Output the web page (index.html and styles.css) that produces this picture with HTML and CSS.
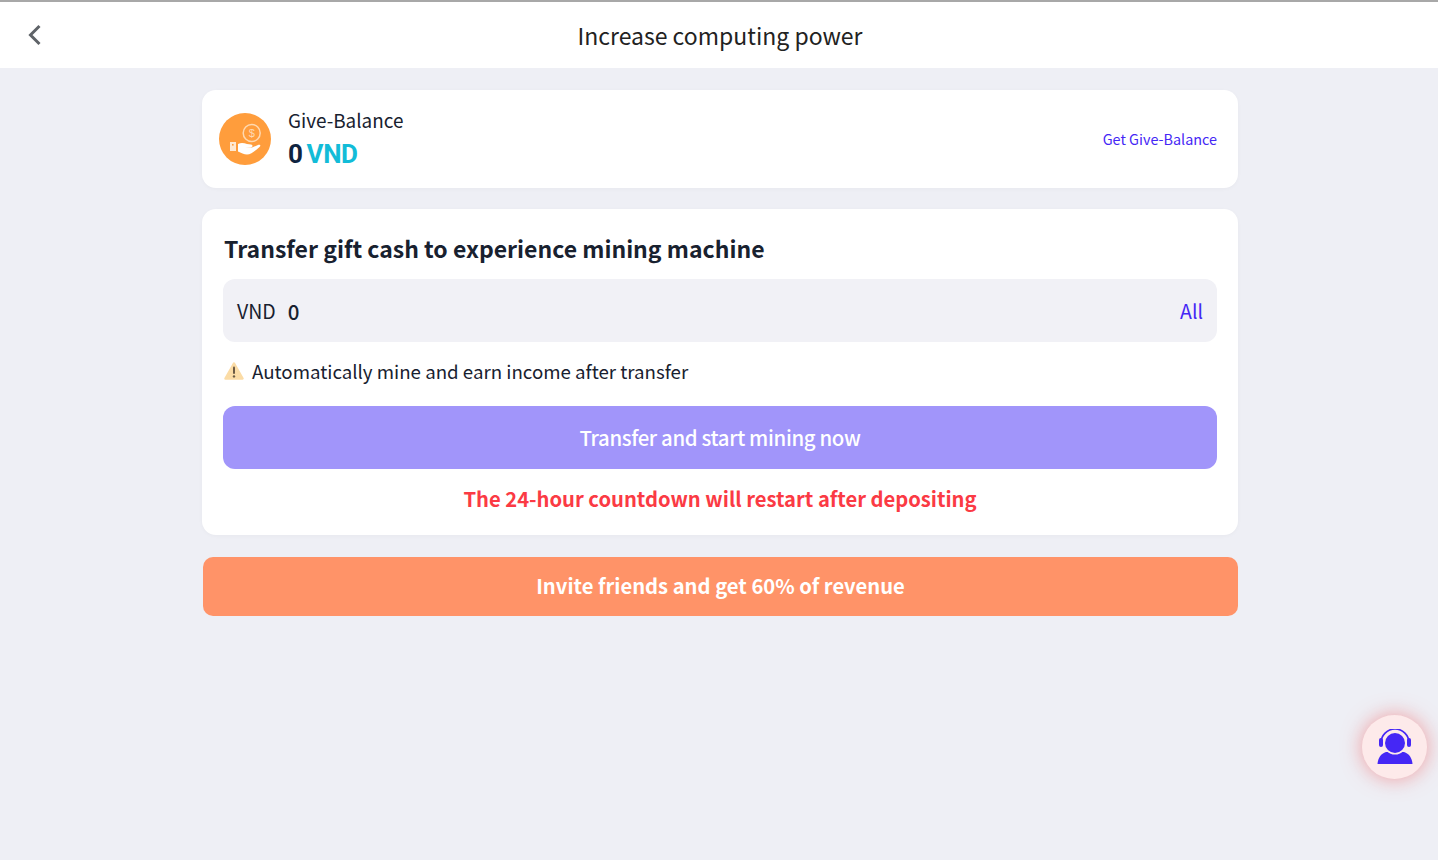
FILE: index.html
```html
<!DOCTYPE html>
<html lang="en">
<head>
    <meta charset="UTF-8">
    <meta name="viewport" content="width=device-width, initial-scale=1.0">
    <title>Increase computing power</title>
    <link rel="stylesheet" href="styles.css">
</head>
<body>
    <header class="top-bar">
        <svg class="back-icon" width="14" height="22" viewBox="0 0 14 22" fill="none">
            <path d="M11.5 2 L2.5 11 L11.5 20" stroke="#5f6368" stroke-width="3"/>
        </svg>
        <h1>Increase computing power</h1>
    </header>

    <main class="container">
        <section class="card balance-card">
            <svg class="coin-icon" width="52" height="52" viewBox="0 0 52 52">
                <circle cx="26" cy="26" r="26" fill="#ff9d3c"/>
                <circle cx="32.7" cy="20" r="8.5" fill="none" stroke="#ffd9b0" stroke-width="1.5"/>
                <text x="32.7" y="24" class="coin-sign">$</text>
                <rect x="11" y="29" width="6" height="9" fill="#ffe9d2"/>
                <rect x="13" y="31" width="1.6" height="1.6" fill="#ff9d3c"/>
                <path d="M19 31 C22 29.5 25 30 28 31 L32 31.5 C34 32 34 34 32 34.2 L26 34.6 L33 34.6 L39 32 C41.5 31.4 42 33 40.5 34 C36 38 32 41.5 28 41.5 C25 41.5 22 39.5 19 38.5 Z" fill="#fff"/>
            </svg>
            <div class="balance-info">
                <div class="balance-label">Give-Balance</div>
                <div class="balance-value">0 <span class="currency">VND</span></div>
            </div>
            <a class="get-link" href="#">Get Give-Balance</a>
        </section>

        <section class="card transfer-card">
            <h2>Transfer gift cash to experience mining machine</h2>
            <div class="amount-row">
                <span class="amount-unit">VND</span>
                <span class="amount-value">0</span>
                <a class="all-link" href="#">All</a>
            </div>
            <p class="notice">
                <svg width="20" height="18" viewBox="0 0 20 18">
                    <path d="M10 1.5 L18.5 16.5 H1.5 Z" fill="#fbdca6" stroke="#fbdca6" stroke-width="2.5" stroke-linejoin="round"/>
                    <rect x="9" y="4.5" width="2" height="7.5" rx="1" fill="#6b5a45"/>
                    <circle cx="10" cy="14.4" r="1.2" fill="#6b5a45"/>
                </svg>
                Automatically mine and earn income after transfer
            </p>
            <button class="btn-transfer">Transfer and start mining now</button>
            <p class="countdown">The 24-hour countdown will restart after depositing</p>
        </section>

        <button class="btn-invite">Invite friends and get 60% of revenue</button>
    </main>

    <!-- botao de suporte flutuante -->
    <div class="support-btn">
        <svg width="36" height="36" viewBox="0 0 36 36">
            <path d="M4 14 A14 14 0 0 1 32 14" fill="none" stroke="#4527f5" stroke-width="1.7"/>
            <rect x="2" y="9" width="4" height="9" rx="2" fill="#4527f5"/>
            <rect x="30" y="9" width="4" height="9" rx="2" fill="#4527f5"/>
            <path d="M0.5 35 C1 29 4 24.5 9 23 L27 23 C32 24.5 35 29 35.5 35 Z" fill="#4527f5"/>
            <circle cx="18" cy="14" r="11.5" fill="#fdeaea"/>
            <circle cx="18" cy="14" r="10" fill="#4527f5"/>
        </svg>
    </div>
</body>
</html>
```

FILE: styles.css
```css
* {
    box-sizing: border-box;
}
body {
    margin: 0;
    min-height: 100vh;
    background-color: #eeeff5;
    font-family: "Noto Sans CJK SC", "Noto Sans", sans-serif;
    color: #18212f;
}
.top-bar {
    position: relative;
    height: 68px;
    background-color: #fff;
    border-top: 2px solid #a8a8a8;
    display: flex;
    align-items: center;
    justify-content: center;
}
.top-bar h1 {
    margin: 0 0 0 2px;
    font-size: 23px;
    font-weight: 400;
    color: #222;
}
.back-icon {
    position: absolute;
    left: 28px;
    top: 22px;
}
.container {
    width: 1036px;
    margin: 22px 0 0 202px;
}
.card {
    background-color: #fff;
    border-radius: 14px;
    box-shadow: 0 1px 4px rgba(0, 0, 0, 0.03);
}
.balance-card {
    height: 98px;
    padding: 0 21px 0 17px;
    display: flex;
    align-items: center;
}
.balance-info {
    margin-left: 17px;
    padding-top: 2px;
}
.balance-label {
    font-size: 18.9px;
    line-height: 30px;
    margin-top: -2px;
}
.balance-value {
    font-family: Roboto, sans-serif;
    font-size: 26px;
    font-weight: 700;
    line-height: 38px;
    letter-spacing: -0.4px;
    word-spacing: -2px;
    color: #0e2340;
}
.currency {
    color: #12bcd8;
}
.get-link {
    margin-left: auto;
    margin-top: -2px;
    font-size: 14.4px;
    color: #4527f5;
    text-decoration: none;
}
.transfer-card {
    margin-top: 21px;
    height: 326px;
    padding: 21px;
}
.transfer-card h2 {
    margin: -2px 0 11px 1px;
    font-size: 23px;
    line-height: 40px;
    font-weight: 700;
    color: #18212f;
}
.amount-row {
    height: 63px;
    background-color: #f1f1f6;
    border-radius: 12px;
    padding: 0 14px;
    display: flex;
    align-items: center;
    font-size: 19.5px;
}
.amount-value {
    margin-left: 12px;
    font-size: 20.5px;
    font-weight: 500;
}
.all-link {
    margin-left: auto;
    color: #4527f5;
    text-decoration: none;
}
.notice {
    margin: 13px 0 19px 1px;
    font-size: 18.7px;
    line-height: 32px;
    display: flex;
    align-items: center;
    gap: 8px;
}
.btn-transfer {
    display: block;
    width: 100%;
    height: 63px;
    padding: 0 0 2px;
    border: none;
    border-radius: 12px;
    background-color: #a195fa;
    color: #fff;
    font-family: inherit;
    font-size: 20.4px;
    font-weight: 500;
    letter-spacing: -0.35px;
}
.countdown {
    margin: 14px 0 0;
    text-align: center;
    font-size: 20.2px;
    line-height: 32px;
    font-weight: 700;
    color: #fb3a44;
}
.btn-invite {
    display: block;
    width: 1035px;
    height: 59px;
    margin: 22px 0 0 1px;
    padding: 0 0 2px;
    border: none;
    border-radius: 10px;
    background-color: #ff9368;
    color: #fff;
    font-family: inherit;
    font-size: 20.2px;
    font-weight: 700;
}
.support-btn {
    position: fixed;
    left: 1362px;
    top: 715px;
    width: 65px;
    height: 64px;
    border-radius: 50%;
    background-color: #fdeaea;
    box-shadow: 0 0 20px rgba(240, 90, 90, 0.55);
    display: flex;
    align-items: center;
    justify-content: center;
}
.coin-sign {
    font-family: "Liberation Sans", sans-serif;
    font-size: 11px;
    fill: #ffd9b0;
    text-anchor: middle;
}
```
